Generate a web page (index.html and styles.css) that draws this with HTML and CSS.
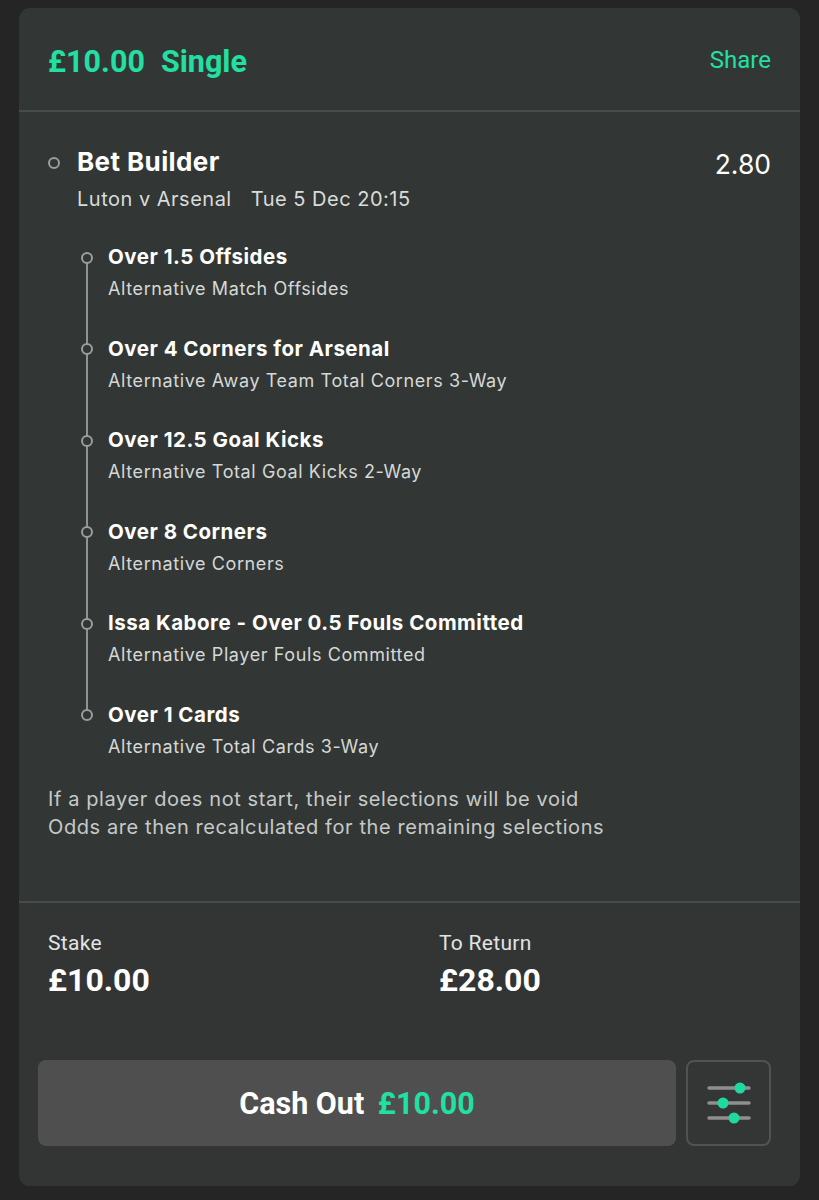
FILE: index.html
```html
<!DOCTYPE html>
<html>
<head>
<meta charset="utf-8">
<link rel="stylesheet" href="styles.css">
</head>
<body>
<div class="card">
  <header class="head">
    <div class="title"><span>£10.00</span><span>Single</span></div>
    <div class="share">Share</div>
  </header>
  <section class="body">
    <div class="bb-row">
      <span class="ring big"></span>
      <div class="bb-main">
        <div class="bb-title">Bet Builder</div>
        <div class="bb-sub"><span>Luton v Arsenal</span><span>Tue 5 Dec 20:15</span></div>
      </div>
      <div class="odds">2.80</div>
    </div>
    <ul class="legs">
      <li class="leg"><span class="ring"></span><div class="leg-t">Over 1.5 Offsides</div><div class="leg-s">Alternative Match Offsides</div></li>
      <li class="leg"><span class="ring"></span><div class="leg-t">Over 4 Corners for Arsenal</div><div class="leg-s">Alternative Away Team Total Corners 3-Way</div></li>
      <li class="leg"><span class="ring"></span><div class="leg-t">Over 12.5 Goal Kicks</div><div class="leg-s">Alternative Total Goal Kicks 2-Way</div></li>
      <li class="leg"><span class="ring"></span><div class="leg-t">Over 8 Corners</div><div class="leg-s">Alternative Corners</div></li>
      <li class="leg"><span class="ring"></span><div class="leg-t">Issa Kabore - Over 0.5 Fouls Committed</div><div class="leg-s">Alternative Player Fouls Committed</div></li>
      <li class="leg"><span class="ring"></span><div class="leg-t">Over 1 Cards</div><div class="leg-s">Alternative Total Cards 3-Way</div></li>
    </ul>
    <p class="note">If a player does not start, their selections will be void<br>Odds are then recalculated for the remaining selections</p>
  </section>
  <section class="foot">
    <div class="sums">
      <div class="sum"><div class="lbl">Stake</div><div class="val">£10.00</div></div>
      <div class="sum"><div class="lbl">To Return</div><div class="val">£28.00</div></div>
    </div>
    <div class="actions">
      <button class="cash">Cash Out <span class="green">£10.00</span></button>
      <button class="opts" aria-label="options">
        <svg width="46" height="42" viewBox="0 0 46 42">
          <g stroke="#8e8f8e" stroke-width="3.5" stroke-linecap="round">
            <line x1="3" y1="6" x2="43" y2="6"/>
            <line x1="3" y1="21" x2="43" y2="21"/>
            <line x1="3" y1="36" x2="43" y2="36"/>
          </g>
          <g fill="#1fd9a0">
            <circle cx="34" cy="6" r="5.5"/>
            <circle cx="17" cy="21" r="5.5"/>
            <circle cx="28" cy="36" r="5.5"/>
          </g>
        </svg>
      </button>
    </div>
  </section>
</div>
</body>
</html>
```

FILE: styles.css
```css
html, body {
  margin: 0;
  padding: 0;
  background: #242524;
}
body {
  padding: 8px 19px 14px 19px;
  font-family: Inter, "Noto Sans", sans-serif;
  color: #fff;
}
.card {
  background: #323735;
  border-radius: 11px;
  overflow: hidden;
  height: 1178px;
  display: flex;
  flex-direction: column;
}
.head {
  height: 102px;
  display: flex;
  align-items: center;
  justify-content: space-between;
  padding: 0 29px;
  border-bottom: 2px solid #464c49;
  font-family: Roboto, "Liberation Sans", sans-serif;
  color: #22e0a2;
}
.title {
  display: flex;
  gap: 16px;
  font-weight: 700;
  font-size: 30.5px;
  margin-top: 4px;
}
.share {
  font-size: 24px;
  margin-top: 2px;
}
.body {
  flex: 1;
  padding: 33px 29px 0 29px;
  border-bottom: 2px solid #464c49;
}
.bb-row {
  display: flex;
  align-items: flex-start;
}
.ring {
  width: 9px;
  height: 9px;
  border: 2px solid #9a9e9c;
  border-radius: 50%;
  box-sizing: border-box;
  background: #323735;
  flex: none;
}
.ring.big {
  width: 12px;
  height: 12px;
  margin: 12px 17px 0 0;
}
.bb-main { flex: 1; }
.bb-title {
  font-size: 26px;
  font-weight: 700;
  line-height: 34px;
  letter-spacing: 0.4px;
}
.bb-sub {
  font-size: 20px;
  color: #d9dbda;
  margin-top: 8px;
  display: flex;
  gap: 19px;
  letter-spacing: 0.5px;
}
.odds {
  font-size: 26.5px;
  line-height: 34px;
  margin-top: 2px;
}
.legs {
  list-style: none;
  margin: 32px 0 0 0;
  padding: 0 0 0 30px;
  position: relative;
}
.leg {
  position: relative;
  padding-left: 30px;
  height: 91.5px;
}
.leg:last-child { height: 60px; }
.leg::before {
  content: "";
  position: absolute;
  left: 8px;
  top: 15px;
  height: 92px;
  width: 2px;
  background: #8f9391;
}
.leg:last-child::before { display: none; }
.leg .ring {
  position: absolute;
  left: 3px;
  top: 8.5px;
  width: 12px;
  height: 12px;
}
.leg-t {
  font-size: 20.5px;
  font-weight: 700;
  line-height: 28px;
  letter-spacing: 0.5px;
}
.leg-s {
  font-size: 18px;
  color: #d6d8d7;
  line-height: 24px;
  margin-top: 6px;
  letter-spacing: 0.6px;
}
.note {
  margin: 24px 0 0 0;
  font-size: 20px;
  line-height: 28px;
  color: #c7c9c8;
  letter-spacing: 0.6px;
}
.foot {
  height: 283px;
  padding: 28px 29px 0 19px;
  background: #333534;
  box-sizing: border-box;
}
.sums {
  display: grid;
  grid-template-columns: 391px 1fr;
  padding-left: 10px;
}
.lbl {
  font-family: Roboto, "Liberation Sans", sans-serif;
  font-size: 21px;
  color: #e2e3e3;
  letter-spacing: 0.3px;
}
.val {
  font-family: Roboto, "Liberation Sans", sans-serif;
  font-weight: 700;
  font-size: 32px;
  margin-top: 6px;
}
.actions {
  display: flex;
  gap: 10px;
  margin-top: 61px;
}
.cash {
  width: 638px;
  height: 86px;
  background: #4f4f4f;
  border: none;
  border-radius: 8px;
  font-family: Roboto, "Liberation Sans", sans-serif;
  font-weight: 700;
  font-size: 30.5px;
  color: #fff;
}
.green { color: #22e0a2; margin-left: 6px; }
.opts {
  width: 85px;
  height: 86px;
  background: #343635;
  border: 2px solid #505352;
  border-radius: 8px;
  display: flex;
  align-items: center;
  justify-content: center;
  padding: 0;
}
```
